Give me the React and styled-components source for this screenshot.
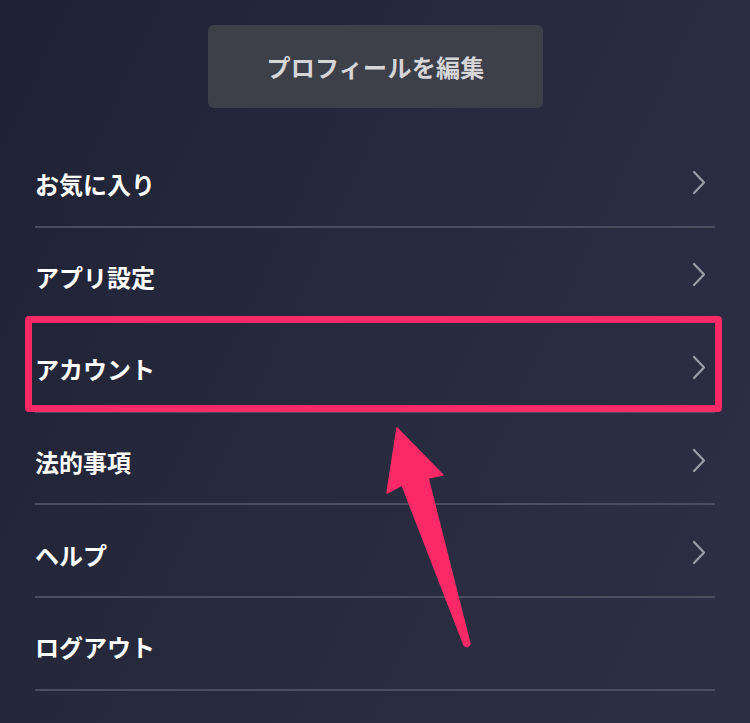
import React from "react";
import styled, { createGlobalStyle } from "styled-components";

const GlobalStyle = createGlobalStyle`
	html, body {
		margin: 0;
		padding: 0;
	}
	body {
		font-family: "Noto Sans CJK JP", "Noto Sans", sans-serif;
		background: #23263a;
	}
`;

const Page = styled.div`
	position: relative;
	width: 750px;
	height: 723px;
	overflow: hidden;
	background: linear-gradient(115deg, #1f2234 0%, #272a3d 45%, #2d3044 100%);
	padding-top: 25px;
	box-sizing: border-box;
`;

const TopBar = styled.div`
	display: flex;
	justify-content: center;
`;

const EditBtn = styled.div`
	width: 335px;
	height: 83px;
	margin-left: 1px;
	border-radius: 6px;
	background-color: #3d3f49;
	color: #d6d6d8;
	font-weight: 700;
	font-size: 24px;
	display: flex;
	justify-content: center;
	align-items: center;
	letter-spacing: 0.3px;
`;

const MenuList = styled.div`
	margin: 27px 35px 0 35px;
`;

const Row = styled.div`
	position: relative;
	height: 92.6px;
	box-sizing: border-box;
	border-bottom: 2px solid #4b4e5c;
	display: flex;
	align-items: center;
	justify-content: space-between;
	padding-top: 8px;
`;

const Label = styled.span`
	color: #ffffff;
	font-weight: 700;
	font-size: 24px;
	line-height: 30px;
`;

const Chevron = styled.svg`
	width: 14px;
	height: 25px;
	margin-right: 9px;
	margin-top: -4px;
`;

const Highlight = styled.div`
	position: absolute;
	left: -10px;
	right: -7px;
	top: -4px;
	bottom: -1px;
	border: 7px solid #fb2a67;
	border-radius: 4px;
	pointer-events: none;
`;

const Arrow = styled.svg`
	position: absolute;
	left: 0;
	top: 0;
	width: 750px;
	height: 723px;
	pointer-events: none;
`;

const ITEMS = [
	{ name: "お気に入り", arrow: true },
	{ name: "アプリ設定", arrow: true },
	{ name: "アカウント", arrow: true, active: true },
	{ name: "法的事項", arrow: true },
	{ name: "ヘルプ", arrow: true },
	{ name: "ログアウト", arrow: false },
];

export default function App() {
	return (
		<>
			<GlobalStyle />
			<Page>
				<TopBar>
					<EditBtn>プロフィールを編集</EditBtn>
				</TopBar>
				<MenuList>
					{ITEMS.map((item) => (
						<Row key={item.name}>
							<Label>{item.name}</Label>
							{item.arrow && (
								<Chevron viewBox="0 0 14 25">
									<path
										d="M2 2 L12 12.5 L2 23"
										fill="none"
										stroke="#9b9da8"
										strokeWidth="2.2"
										strokeLinecap="round"
										strokeLinejoin="round"
									/>
								</Chevron>
							)}
							{item.active && <Highlight />}
						</Row>
					))}
				</MenuList>
				<Arrow viewBox="0 0 750 723">
					<path
						d="M397 428 L443 475 L428 478 L470 644 Q468 649 464 645 L402 485 L387 493 Z"
						fill="#fb2a67"
						stroke="#fb2a67"
						strokeWidth="1.5"
						strokeLinejoin="round"
					/>
				</Arrow>
			</Page>
		</>
	);
}
